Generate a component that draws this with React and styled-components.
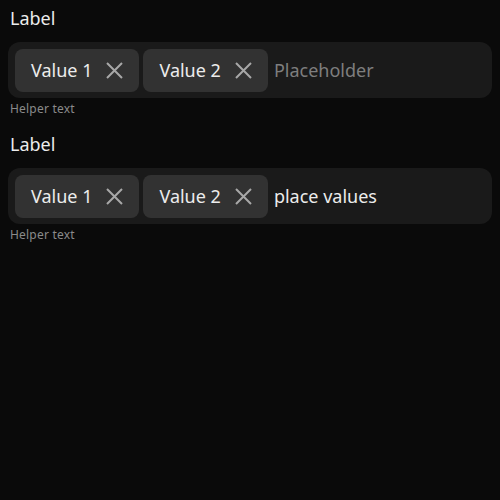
import React from 'react';
import styled, { createGlobalStyle } from 'styled-components';

const GlobalStyle = createGlobalStyle`
    html, body {
        margin: 0;
        padding: 0;
        background-color: #0a0a0a;
    }

    body {
        font-family: "Noto Sans", "Open Sans", sans-serif;
        color: #ececec;
    }
`;

const Page = styled.div`
    min-height: 100vh;
    box-sizing: border-box;
    padding: 6px 8px;
    display: flex;
    flex-direction: column;
    gap: 15px;
`;

const Group = styled.div`
    display: flex;
    flex-direction: column;
`;

const Label = styled.div`
    padding-left: 2px;
    margin-bottom: 12px;

    font-size: 18px;
    line-height: 24px;
    color: #ececec;
`;

const Field = styled.div`
    height: 56px;
    box-sizing: border-box;
    padding: 6px 7px;

    display: flex;
    align-items: center;
    gap: 4px;

    background-color: #1a1a1a;
    border-radius: 12px;
`;

const Chip = styled.div`
    height: 43px;
    box-sizing: border-box;
    padding: 0 16px 0 16px;

    display: flex;
    align-items: center;
    gap: 14px;

    background-color: #323232;
    border-radius: 8px;

    font-size: 18px;
    color: #ececec;
`;

const Remove = styled.span`
    width: 17px;
    height: 17px;
    display: flex;
    align-items: center;
    justify-content: center;
    color: #a8a8a8;
`;

const Input = styled.span`
    margin-left: 2px;
    font-size: 18px;
    color: ${({ $filled }) => ($filled ? '#ececec' : '#7e7e7e')};
`;

const Helper = styled.div`
    padding-left: 2px;
    margin-top: 3px;

    font-size: 12px;
    letter-spacing: 0.2px;
    line-height: 16px;
    color: #8a8a8a;
`;

function CloseIcon() {
    return (
        <svg width="17" height="17" viewBox="0 0 17 17" fill="none" stroke="currentColor" strokeWidth="2">
            <path d="M1 1 L16 16 M16 1 L1 16" />
        </svg>
    );
}

function ValueChip({ children }) {
    return (
        <Chip>
            {children}
            <Remove>
                <CloseIcon />
            </Remove>
        </Chip>
    );
}

function MultiInput({ text, filled }) {
    return (
        <Group>
            <Label>Label</Label>
            <Field>
                <ValueChip>Value 1</ValueChip>
                <ValueChip>Value 2</ValueChip>
                <Input $filled={filled}>{text}</Input>
            </Field>
            <Helper>Helper text</Helper>
        </Group>
    );
}

export default function App() {
    return (
        <>
            <GlobalStyle />
            <Page>
                <MultiInput text="Placeholder" />
                <MultiInput text="place values" filled />
            </Page>
        </>
    );
}
